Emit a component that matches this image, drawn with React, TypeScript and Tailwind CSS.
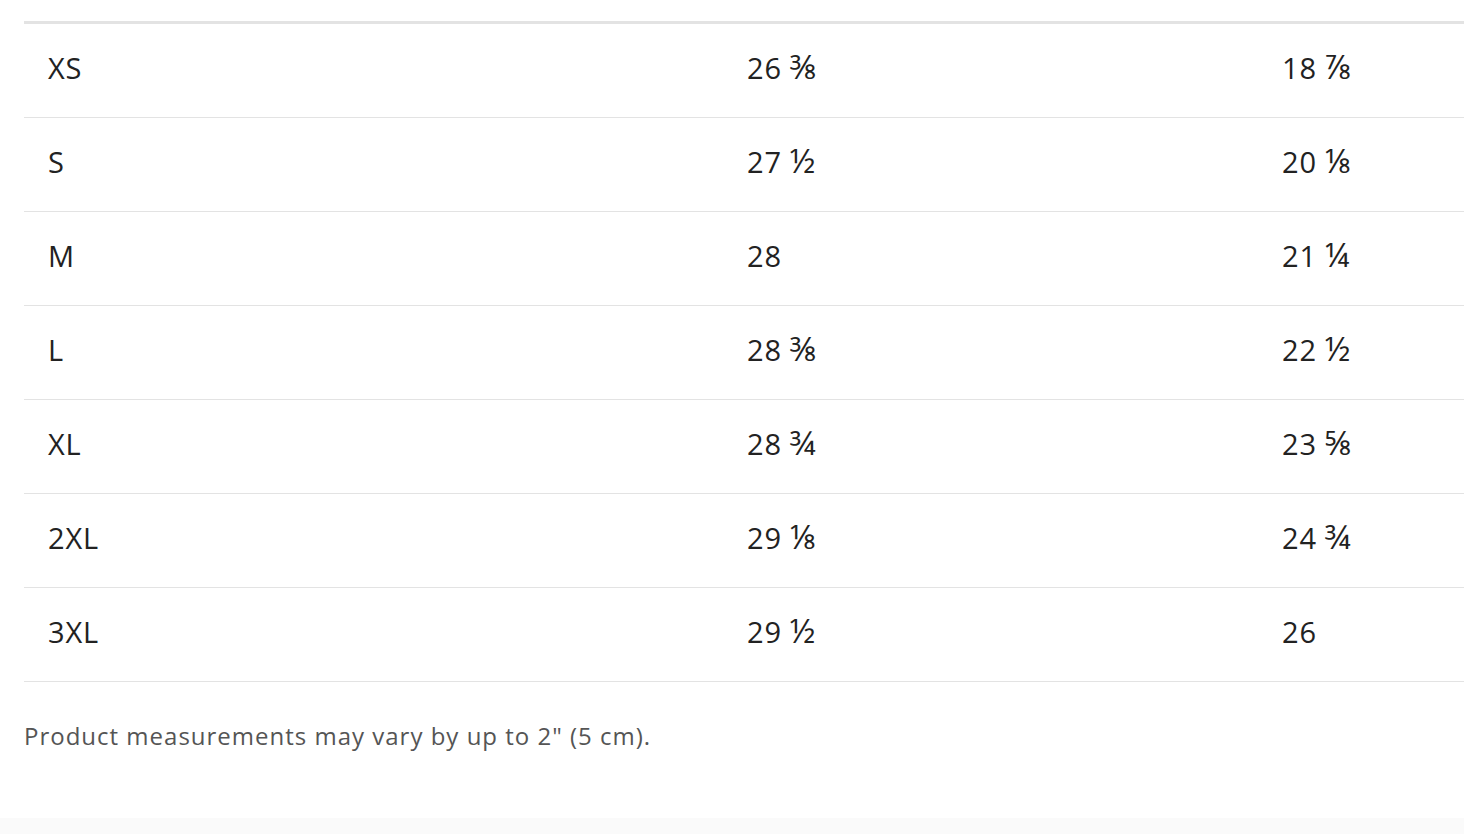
const rows: [string, string, string][] = [
  ["XS", "26 ⅜", "18 ⅞"],
  ["S", "27 ½", "20 ⅛"],
  ["M", "28", "21 ¼"],
  ["L", "28 ⅜", "22 ½"],
  ["XL", "28 ¾", "23 ⅝"],
  ["2XL", "29 ⅛", "24 ¾"],
  ["3XL", "29 ½", "26"],
];

function Measure({ value }: { value: string }) {
  const [whole, frac] = value.split(" ");
  return (
    <span>
      {whole}
      {frac && <span className="ml-2 text-[33px] tracking-normal">{frac}</span>}
    </span>
  );
}

export default function App() {
  return (
    <div className="min-h-screen bg-[#fafafa] font-['Open_Sans','Liberation_Sans',sans-serif]">
      <div className="bg-white pt-[21px] pb-[66px] pl-6">
        <div className="border-t-[3px] border-[#e3e3e3]">
          {rows.map((r) => (
            <div
              key={r[0]}
              className="grid h-[94px] grid-cols-[699px_535px_1fr] items-center border-b border-[#e3e3e3] pb-1.5 text-[29px] leading-10 tracking-[0.8px] text-[#222]"
            >
              <div className="pl-6">{r[0]}</div>
              <div className="pl-6">
                <Measure value={r[1]} />
              </div>
              <div className="pl-6">
                <Measure value={r[2]} />
              </div>
            </div>
          ))}
        </div>
        <p className="mt-[38px] text-[24px] leading-8 tracking-[1px] text-[#555]">
          Product measurements may vary by up to 2" (5 cm).
        </p>
      </div>
    </div>
  );
}
